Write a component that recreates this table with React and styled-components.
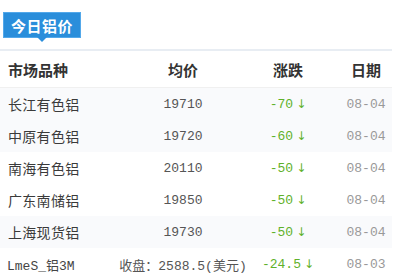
import React from "react";
import styled, { createGlobalStyle } from "styled-components";

const Global = createGlobalStyle`
  html, body { margin: 0; padding: 0; background: #fff; }
  body { font-family: "Noto Sans CJK SC", "Noto Sans", sans-serif; }
`;

const Wrap = styled.div`
  width: 392px;
  padding-top: 12px;
`;

const TitleBar = styled.div`
  padding-left: 3px;
  height: 37px;
  border-bottom: 2px solid #e8edf3;
`;

const Tag = styled.div`
  position: relative;
  display: inline-flex;
  align-items: center;
  justify-content: center;
  box-sizing: border-box;
  width: 78px;
  height: 26px;
  background: #2a8edb;
  border: 1px solid #53a8ea;
  color: #fff;
  font-size: 15px;
  font-weight: 700;
  letter-spacing: 0.5px;
  &::after {
    content: "";
    position: absolute;
    left: 50%;
    bottom: -5px;
    margin-left: -5px;
    border-left: 5px solid transparent;
    border-right: 5px solid transparent;
    border-top: 5px solid #2a8edb;
  }
`;

const Row = styled.div`
  display: grid;
  grid-template-columns: 130px 106px 104px 52px;
  height: ${(p) => (p.$head ? "36px" : "32px")};
  align-items: center;
  background: ${(p) => (p.$shade ? "#f9fafc" : "#fff")};
  border-bottom: ${(p) => (p.$head ? "1px solid #f0f0f0" : "none")};
`;

const HeadCell = styled.div`
  font-size: 15px;
  font-weight: 700;
  color: #333;
  text-align: ${(p) => (p.$left ? "left" : "center")};
  padding-left: ${(p) => (p.$left ? "8px" : "0")};
`;

const NameCell = styled.div`
  font-size: 14px;
  color: #3a3a3a;
  padding-left: 8px;
  letter-spacing: 0.3px;
  white-space: nowrap;
`;

const MonoName = styled.div`
  font-family: "Liberation Mono", "Noto Sans CJK SC", monospace;
  font-size: 13px;
  color: #444;
  padding-left: 7px;
  white-space: nowrap;
`;

const NumCell = styled.div`
  display: flex;
  justify-content: center;
  white-space: nowrap;
  font-family: "Liberation Mono", "Noto Sans CJK SC", monospace;
  font-size: 13px;
  color: ${(p) => p.$color || "#555"};
`;

const Arrow = styled.span`
  color: #5fb12a;
  margin-left: 3px;
  font-family: "DejaVu Sans", sans-serif;
  font-size: 12px;
`;

const rows = [
  ["长江有色铝", "19710", "-70", "08-04", true],
  ["中原有色铝", "19720", "-60", "08-04", true],
  ["南海有色铝", "20110", "-50", "08-04", false],
  ["广东南储铝", "19850", "-50", "08-04", false],
  ["上海现货铝", "19730", "-50", "08-04", true],
];

export default function App() {
  return (
    <Wrap>
      <Global />
      <TitleBar>
        <Tag>今日铝价</Tag>
      </TitleBar>
      <Row $head>
        <HeadCell $left>市场品种</HeadCell>
        <HeadCell>均价</HeadCell>
        <HeadCell>涨跌</HeadCell>
        <HeadCell>日期</HeadCell>
      </Row>
      {rows.map(([n, p, c, d, s]) => (
        <Row key={n} $shade={s}>
          <NameCell>{n}</NameCell>
          <NumCell>{p}</NumCell>
          <NumCell $color="#5fb12a">
            {c}
            <Arrow>↓</Arrow>
          </NumCell>
          <NumCell $color="#999">{d}</NumCell>
        </Row>
      ))}
      <Row>
        <MonoName>LmeS_铝3M</MonoName>
        <NumCell>收盘：2588.5(美元)</NumCell>
        <NumCell $color="#5fb12a">
          -24.5
          <Arrow>↓</Arrow>
        </NumCell>
        <NumCell $color="#999">08-03</NumCell>
      </Row>
    </Wrap>
  );
}
